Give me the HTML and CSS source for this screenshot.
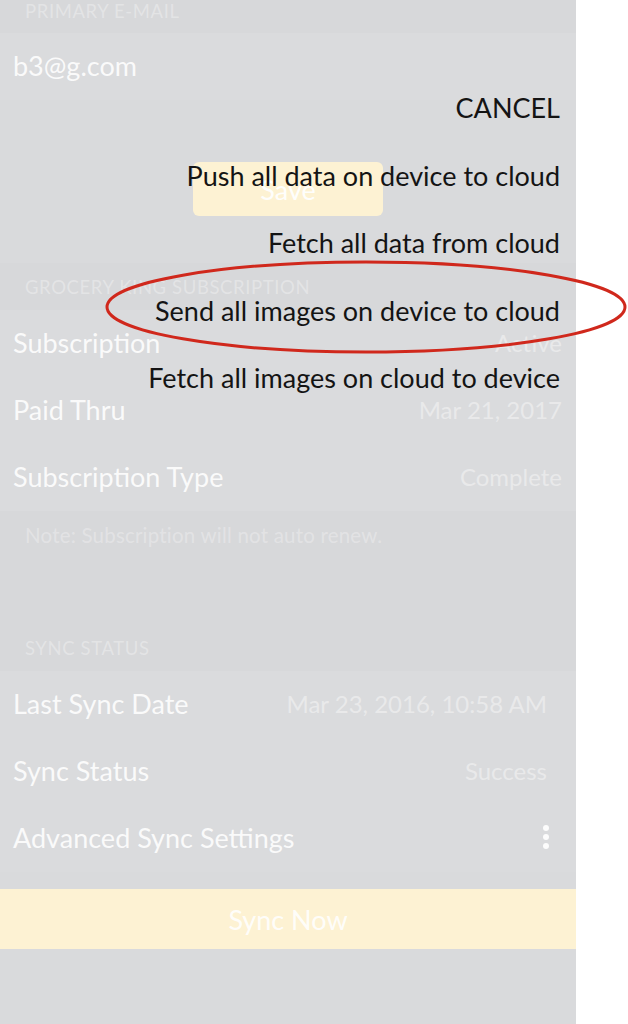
FILE: index.html
```html
<!DOCTYPE html>
<html>
<head>
<meta charset="utf-8">
<link rel="stylesheet" href="styles.css">
</head>
<body>
<div class="page">
  <div class="screen">
    <div class="section-header hdr-email">PRIMARY E-MAIL</div>
    <div class="row"><span class="label">b3@g.com</span></div>
    <div class="save-area"><div class="save-btn">Save</div></div>
    <div class="section-header hdr-sub">GROCERY KING SUBSCRIPTION</div>
    <div class="row"><span class="label">Subscription</span><span class="value">Active</span></div>
    <div class="row"><span class="label">Paid Thru</span><span class="value">Mar 21, 2017</span></div>
    <div class="row"><span class="label">Subscription Type</span><span class="value">Complete</span></div>
    <div class="note">Note: Subscription will not auto renew.</div>
    <div class="section-header hdr-sync">SYNC STATUS</div>
    <div class="row row-inset"><span class="label">Last Sync Date</span><span class="value">Mar 23, 2016, 10:58 AM</span></div>
    <div class="row row-inset"><span class="label">Sync Status</span><span class="value">Success</span></div>
    <div class="row row-inset"><span class="label">Advanced Sync Settings</span><span class="dots"><i></i><i></i><i></i></span></div>
    <div class="sync-now">Sync Now</div>
  </div>

  <div class="menu">
    <div class="menu-item">CANCEL</div>
    <div class="menu-item">Push all data on device to cloud</div>
    <div class="menu-item">Fetch all data from cloud</div>
    <div class="menu-item">Send all images on device to cloud</div>
    <div class="menu-item">Fetch all images on cloud to device</div>
  </div>

  <svg class="annotation" width="526" height="98" viewBox="0 0 526 98">
    <ellipse cx="262" cy="48" rx="259" ry="45" fill="none" stroke="#d0281c" stroke-width="3"/>
  </svg>
</div>
</body>
</html>
```

FILE: styles.css
```css
html, body {
  margin: 0;
  padding: 0;
  background: #ffffff;
}

.page {
  position: relative;
  width: 628px;
  height: 1024px;
  font-family: "Lato", "Open Sans", sans-serif;
}

.screen {
  width: 576px;
  height: 1024px;
  background: #d9dadc;
  display: flex;
  flex-direction: column;
}

.section-header {
  box-sizing: border-box;
  padding-left: 25px;
  font-size: 18.5px;
  letter-spacing: 0.6px;
  color: rgba(255, 255, 255, 0.32);
  background: #d7d8da;
  display: flex;
}

.hdr-email {
  height: 33px;
  align-items: flex-start;
  padding-top: 0;
}

.hdr-sub {
  height: 47px;
  align-items: flex-start;
  padding-top: 13px;
}

.hdr-sync {
  height: 60px;
  align-items: flex-end;
  padding-bottom: 12px;
}

.row {
  box-sizing: border-box;
  height: 67px;
  padding: 0 14px 3px 13px;
  display: flex;
  align-items: center;
  justify-content: space-between;
  background: #dadbdd;
}

.row-inset {
  padding-right: 29px;
}

.label {
  font-size: 27px;
  color: rgba(255, 255, 255, 0.88);
}

.value {
  font-size: 24px;
  color: rgba(255, 255, 255, 0.42);
}

.save-area {
  height: 163px;
  display: flex;
  justify-content: center;
  align-items: flex-start;
  background: #d9dadc;
}

.save-btn {
  margin-top: 62px;
  width: 190px;
  height: 54px;
  border-radius: 6px;
  background: #fdf2d3;
  color: rgba(255, 255, 255, 0.95);
  font-size: 27px;
  display: flex;
  align-items: center;
  justify-content: center;
}

.note {
  box-sizing: border-box;
  height: 100px;
  padding: 12px 0 0 25px;
  font-size: 20.5px;
  letter-spacing: 0.2px;
  color: rgba(255, 255, 255, 0.3);
  background: #d7d8da;
}

.dots {
  display: flex;
  flex-direction: column;
  gap: 3px;
  margin-right: -2px;
}

.dots i {
  display: block;
  width: 6px;
  height: 6px;
  border-radius: 50%;
  background: rgba(255, 255, 255, 0.9);
}

.sync-now {
  margin-top: 17px;
  height: 60px;
  background: #fdf2d3;
  color: rgba(255, 255, 255, 0.9);
  font-size: 27px;
  display: flex;
  align-items: center;
  justify-content: center;
}

.menu {
  position: absolute;
  top: 74px;
  right: 68px;
  display: flex;
  flex-direction: column;
  align-items: flex-end;
}

.menu-item {
  height: 67.5px;
  display: flex;
  align-items: center;
  font-size: 27px;
  color: #141414;
}

.annotation {
  position: absolute;
  left: 104px;
  top: 259px;
}
```
